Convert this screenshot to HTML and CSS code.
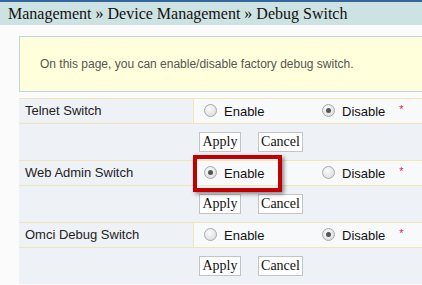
FILE: index.html
```html
<!DOCTYPE html>
<html>
<head>
  <meta charset="utf-8">
  <title>Debug Switch</title>
  <link rel="stylesheet" href="styles.css">
</head>
<body>
  <div class="topline"></div>
  <div class="crumb">Management &raquo; Device Management &raquo; Debug Switch</div>

  <div class="content">
    <div class="info">On this page, you can enable/disable factory debug switch.</div>

    <div class="switch-row">
      <div class="label">Telnet Switch</div>
      <div class="value">
        <label class="opt"><span class="radio"></span>Enable</label>
        <label class="opt"><span class="radio on"></span>Disable</label>
        <span class="req">*</span>
      </div>
    </div>
    <div class="btn-row">
      <button class="btn apply">Apply</button>
      <button class="btn cancel">Cancel</button>
    </div>

    <div class="switch-row">
      <div class="label">Web Admin Switch</div>
      <div class="value">
        <label class="opt"><span class="radio on"></span>Enable</label>
        <label class="opt"><span class="radio"></span>Disable</label>
        <span class="req">*</span>
      </div>
    </div>
    <div class="btn-row">
      <button class="btn apply">Apply</button>
      <button class="btn cancel">Cancel</button>
    </div>

    <div class="switch-row">
      <div class="label">Omci Debug Switch</div>
      <div class="value">
        <label class="opt"><span class="radio"></span>Enable</label>
        <label class="opt"><span class="radio on"></span>Disable</label>
        <span class="req">*</span>
      </div>
    </div>
    <div class="btn-row">
      <button class="btn apply">Apply</button>
      <button class="btn cancel">Cancel</button>
    </div>
  </div>

  <!-- highlight callout over the Web Admin "Enable" option -->
  <div class="highlight"></div>
</body>
</html>
```

FILE: styles.css
```css
body {
  margin: 0;
  background: #fbfbfb;
  font-family: "Liberation Sans", Arial, sans-serif;
  position: relative;
  height: 285px;
  overflow: hidden;
}

.topline {
  height: 2px;
  background: #35679f;
}

.crumb {
  height: 23px;
  line-height: 23px;
  padding-left: 8px;
  background: #cde3e3;
  font-family: "Liberation Serif", "Times New Roman", serif;
  font-size: 16px;
  color: #111;
  white-space: nowrap;
}

.content {
  margin-left: 19px;
  padding-top: 11px;
}

.info {
  height: 54px;
  line-height: 54px;
  padding-left: 20px;
  border: 1px solid #bed6ea;
  border-right: none;
  background: #ffffdc;
  font-size: 12px;
  color: #555;
  margin-bottom: 6px;
  white-space: nowrap;
}

.switch-row {
  display: flex;
  height: 24px;
  border-top: 1px solid #f1e6b6;
  border-bottom: 1px solid #f1e6b6;
  font-size: 13px;
  color: #222;
}

.label {
  width: 168px;
  padding-left: 6px;
  line-height: 24px;
  background: #eef1f6;
  border-right: 1px solid #f1e6b6;
}

.value {
  flex: 1;
  display: flex;
  align-items: center;
  padding-left: 10px;
  background: #f8f9fb;
}

.opt {
  display: flex;
  align-items: center;
  color: #111;
}

.opt:first-child {
  width: 118px;
}

.radio {
  width: 11px;
  height: 11px;
  border-radius: 50%;
  border: 1px solid #a9a9a9;
  background: radial-gradient(circle at 40% 35%, #fbfbfb 0%, #e2e2e2 70%, #cfcfcf 100%);
  margin-right: 7px;
  position: relative;
  top: -1px;
}

.radio.on::after {
  content: "";
  position: absolute;
  left: 3px;
  top: 3px;
  width: 5px;
  height: 5px;
  border-radius: 50%;
  background: #555;
}

.req {
  color: #e0184c;
  font-size: 11px;
  margin-left: 14px;
  position: relative;
  top: -2px;
}

.btn-row {
  height: 36px;
  padding-left: 180px;
  padding-top: 8px;
  box-sizing: border-box;
  background: #eef1f6;
  display: flex;
  gap: 17px;
  align-items: flex-start;
}

.btn {
  height: 20px;
  padding: 0;
  border: 1px solid #c4c4c4;
  background: #fff;
  font-family: "Liberation Serif", "Times New Roman", serif;
  font-size: 14px;
  color: #111;
  line-height: 18px;
}

.btn.apply {
  width: 42px;
}

.btn.cancel {
  width: 45px;
}

.highlight {
  position: absolute;
  left: 193px;
  top: 155px;
  width: 81px;
  height: 29px;
  border: 4px solid #c00000;
  box-shadow: 2px 2px 4px rgba(0, 0, 0, 0.45);
}
```
